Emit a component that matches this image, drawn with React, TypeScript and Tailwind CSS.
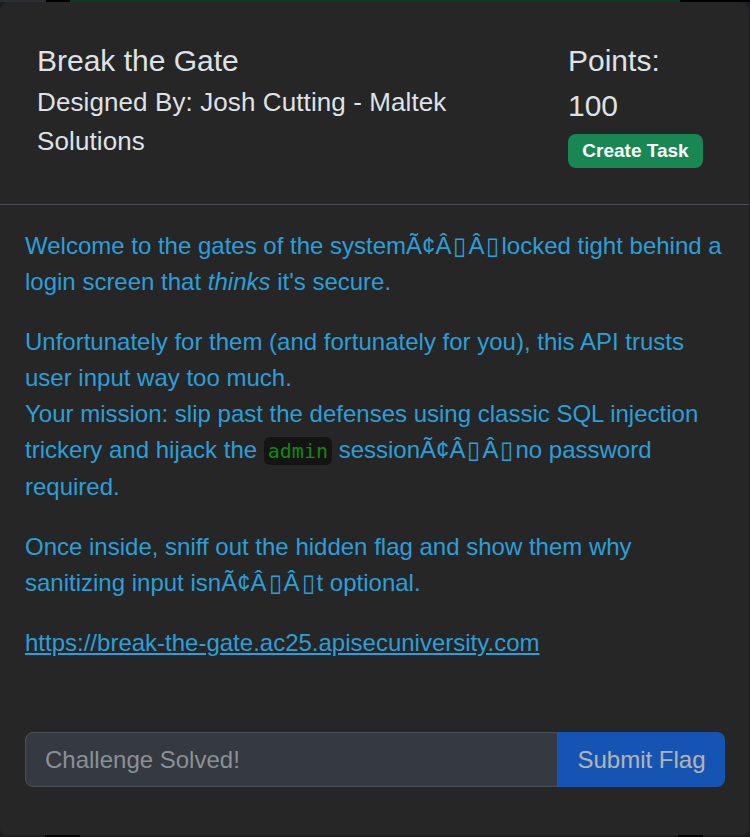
import React from 'react';

// control chars that the original page shows as tofu boxes
const Tofu = () => <span className="mx-[2px]">{'\u25AF'}</span>;

const Garbled = ({ tail }: { tail?: boolean }) => (
    <>
        Ã¢Â<Tofu />Â<Tofu />
    </>
);

const App = () => {
    return (
        <div className="min-h-[837px] w-[750px] bg-[#1b1d20] font-['Liberation_Sans',Arial,sans-serif]">
            {/* backdrop strip peeking above the modal */}
            <div className="flex h-[2px]">
                <div className="w-[46px] bg-[#2a2d31]" />
                <div className="w-[24px] bg-black" />
                <div className="w-[610px] bg-[#0b3a22]" />
                <div className="flex-1 bg-black" />
            </div>
            <div className="w-[749px] h-[833px] rounded-t-[9px] rounded-b-[6px] bg-[#262626] flex flex-col">
                <div className="flex pl-[37px] pr-[46px] pt-[36px] pb-[36px] border-b border-[#4a4d52]">
                    <div className="w-[470px] text-[#dee2e6]">
                        <h5 className="text-[30px] leading-[45px]">Break the Gate</h5>
                        <h6 className="text-[26px] leading-[39px] tracking-[0.1px]">Designed By: Josh Cutting - Maltek Solutions</h6>
                    </div>
                    <div className="ml-auto w-[135px] text-[#dee2e6]">
                        <div className="text-[30px] leading-[45px]">Points:</div>
                        <div className="text-[30px] leading-[45px]">100</div>
                        <button className="mt-[6px] h-[34px] w-[135px] rounded-[8px] bg-[#198754] text-white font-bold text-[19px]">
                            Create Task
                        </button>
                    </div>
                </div>
                <div className="pl-[25px] pr-[24px] pt-[23px] text-[24px] leading-[36px] text-[#2b9fd9]">
                    <p className="mb-[24px]">
                        Welcome to the gates of the system<Garbled />locked tight behind a login screen that <em>thinks</em> it's secure.
                    </p>
                    <p className="mb-[24px]">
                        Unfortunately for them (and fortunately for you), this API trusts user input way too much.
                        <br />
                        Your mission: slip past the defenses using classic SQL injection trickery and hijack the{' '}
                        <code className="rounded-[6px] bg-[#141414] px-[4px] py-[2px] font-['DejaVu_Sans_Mono',monospace] text-[20px] text-[#0f8a0f]">admin</code>{' '}
                        session<Garbled />no password required.
                    </p>
                    <p className="mb-[24px]">
                        Once inside, sniff out the hidden flag and show them why sanitizing input isn<Garbled />t optional.
                    </p>
                    <p>
                        <a href="#" className="underline">https://break-the-gate.ac25.apisecuniversity.com</a>
                    </p>
                </div>
                <div className="mt-[71px] pl-[25px] flex w-[725px]">
                    <input
                        placeholder="Challenge Solved!"
                        disabled
                        className="h-[55px] flex-1 rounded-l-[8px] border border-[#495057] bg-[#343a40] pl-[19px] text-[24px] placeholder:text-[#8c9096] outline-none"
                    />
                    <button className="h-[55px] w-[167px] rounded-r-[8px] bg-[#0d6efd] text-white text-[24px] opacity-65">
                        Submit Flag
                    </button>
                </div>
            </div>
            <div className="flex h-[2px]">
                <div className="w-[45px] bg-[#1b1d20]" />
                <div className="w-[35px] bg-black" />
                <div className="w-[598px] bg-[#1b1d20]" />
                <div className="w-[25px] bg-black" />
            </div>
        </div>
    );
};

export default App;
